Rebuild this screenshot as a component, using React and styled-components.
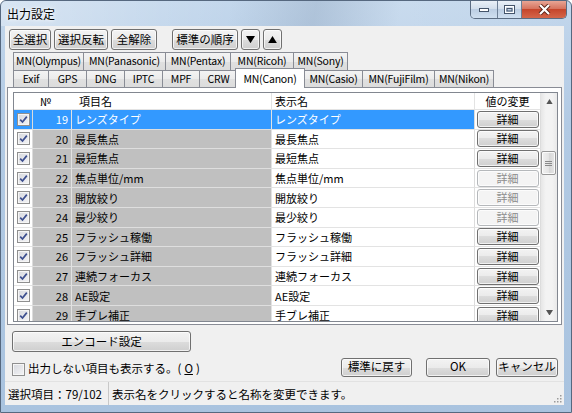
import React from 'react';
import styled, { createGlobalStyle } from 'styled-components';

const GlobalStyle = createGlobalStyle`
  html, body { margin: 0; padding: 0; background: #fff; }
  body { font-family: "Noto Sans CJK JP", "Noto Sans", sans-serif; color: #000; }
  * { box-sizing: border-box; }
`;

const Window = styled.div`
  width: 572px;
  height: 413px;
  display: flex;
  flex-direction: column;
  background: linear-gradient(180deg, #c3d7ec 0%, #b2cae4 30%, #a9c3df 100%);
  border: 1px solid #56687f;
  border-radius: 6px 6px 0 0;
  overflow: hidden;
`;

const TitleBar = styled.div`
  height: 25px;
  display: flex;
  align-items: flex-start;
  padding: 0 4px 0 6px;
  background: linear-gradient(100deg, rgba(255,255,255,0.35) 0%, rgba(255,255,255,0) 40%,
    rgba(120,140,165,0.25) 55%, rgba(255,255,255,0.1) 70%, rgba(255,255,255,0) 100%);
`;

const Title = styled.div`
  font-size: 12px;
  line-height: 14px;
  margin-top: 6px;
  text-shadow: 0 0 6px #fff, 0 0 3px #fff;
`;

const Controls = styled.div`
  margin-left: auto;
  display: flex;
  border: 1px solid #5b6c82;
  border-top: none;
  border-radius: 0 0 5px 5px;
  overflow: hidden;
  height: 18px;
`;

const ControlBtn = styled.div`
  width: ${(p) => p.w}px;
  height: 100%;
  display: flex;
  align-items: center;
  justify-content: center;
  border-left: ${(p) => (p.first ? 'none' : '1px solid #6d7f96')};
  background: ${(p) =>
    p.close
      ? 'linear-gradient(180deg, #e8a595 0%, #d6745f 45%, #c6462c 50%, #d4664a 100%)'
      : 'linear-gradient(180deg, #e9f0f8 0%, #d3dfec 45%, #bccee3 50%, #cfdff0 100%)'};
`;

const Client = styled.div`
  flex: 1;
  margin: 0 7px 7px 4px;
  background: #f0f0f0;
  display: flex;
  flex-direction: column;
`;

const Toolbar = styled.div`
  display: flex;
  gap: 3px;
  padding: 3px 0 0 4px;
  height: 24px;
`;

const Button = styled.button`
  width: ${(p) => p.w}px;
  height: ${(p) => p.h || 21}px;
  margin-left: ${(p) => p.ml || 0}px;
  padding: 0;
  font-family: inherit;
  font-size: ${(p) => p.fs || 11.5}px;
  line-height: 1;
  color: ${(p) => (p.disabled ? '#8d8d8d' : '#000')};
  border: 1px solid ${(p) => (p.disabled ? '#b5b8bb' : '#707070')};
  border-radius: 3px;
  background: ${(p) =>
    p.disabled
      ? '#f4f4f4'
      : 'linear-gradient(180deg, #f3f3f3 0%, #ebebeb 50%, #dddddd 50%, #cfcfcf 100%)'};
  box-shadow: inset 0 0 0 1px rgba(255, 255, 255, 0.7);
  display: flex;
  align-items: center;
  justify-content: center;
  flex-shrink: 0;
`;

const TabStrip = styled.div`
  margin: 2px 2px 0 2px;
  padding-left: 6px;
  display: flex;
  flex-direction: column;
`;

const TabRow = styled.div`
  display: flex;
  height: ${(p) => p.h}px;
  position: relative;
  z-index: ${(p) => p.z};
`;

const Tab = styled.div`
  width: ${(p) => p.w}px;
  margin-right: -1px;
  border: 1px solid #898c95;
  border-bottom: none;
  font-size: 10.5px;
  letter-spacing: -0.2px;
  line-height: 1;
  display: flex;
  align-items: center;
  justify-content: center;
  background: linear-gradient(180deg, #f3f3f3 0%, #ebebeb 50%, #e0e0e0 50%, #dcdcdc 100%);
  white-space: nowrap;
  ${(p) =>
    p.active &&
    `
    background: #fff;
    margin: -2px -1px -1px -2px;
    width: ${p.w + 3}px;
    height: calc(100% + 3px);
    position: relative;
    z-index: 2;
    padding-top: 1px;
  `}
`;

const Panel = styled.div`
  margin: 0 2px;
  height: 238px;
  border: 1px solid #898c95;
  background: #fff;
  padding: 4px 0 0 5px;
`;

const List = styled.div`
  width: 545px;
  height: 230px;
  border: 1px solid #828790;
  display: flex;
  background: #fff;
`;

const Grid = styled.div`
  flex: 1;
  overflow: hidden;
  display: flex;
  flex-direction: column;
`;

const cols = '19px 39px 200px 203px 66px';

const HeaderRow = styled.div`
  display: grid;
  grid-template-columns: ${cols};
  height: 17px;
  flex-shrink: 0;
  border-bottom: 1px solid #e3e3e3;
`;

const HeadCell = styled.div`
  font-size: 11px;
  line-height: 16px;
  padding-left: ${(p) => p.pl || 0}px;
  text-align: ${(p) => p.align || 'left'};
  border-right: ${(p) => (p.edge ? '1px solid #e3e3e3' : 'none')};
`;

const Row = styled.div`
  display: grid;
  grid-template-columns: ${cols};
  height: 19.6px;
  flex-shrink: 0;
`;

const Cell = styled.div`
  font-size: 11px;
  line-height: 18px;
  white-space: nowrap;
  overflow: hidden;
  display: flex;
  align-items: center;
  justify-content: ${(p) => (p.right ? 'flex-end' : p.center ? 'center' : 'flex-start')};
  padding: ${(p) => (p.right ? '0 3px 0 0' : p.center ? '0' : '0 0 0 3px')};
  background: ${(p) => (p.sel ? '#3399ff' : p.gray ? '#c0c0c0' : '#fff')};
  color: ${(p) => (p.sel ? '#fff' : '#000')};
  border-bottom: 1px solid ${(p) => (p.gray ? '#dedede' : '#e3e3e3')};
  border-right: 1px solid ${(p) => (p.gray ? '#e2e2e2' : '#dcdcdc')};
`;

const CheckBox = styled.span`
  width: 13px;
  height: 13px;
  border: 1px solid #8f8f8f;
  background: linear-gradient(135deg, #d6d8de 0%, #f4f4f6 100%);
  box-shadow: inset 0 0 0 1px #f6f6f6;
  display: inline-flex;
  align-items: center;
  justify-content: center;
  flex-shrink: 0;
`;

const ScrollBar = styled.div`
  width: 16px;
  display: flex;
  flex-direction: column;
  background: linear-gradient(90deg, #e6e6e6 0%, #f3f3f3 30%, #f3f3f3 70%, #e9e9e9 100%);
`;

const ScrollArrow = styled.div`
  height: 17px;
  display: flex;
  align-items: center;
  justify-content: center;
`;

const Track = styled.div`
  flex: 1;
  padding-top: 41px;
`;

const Thumb = styled.div`
  width: 15px;
  height: 24px;
  border: 1px solid #979797;
  border-radius: 2px;
  background: linear-gradient(90deg, #f2f2f2 0%, #e4e4e4 50%, #d6d6d6 51%, #e6e6e6 100%);
  box-shadow: inset 0 0 0 1px rgba(255, 255, 255, 0.8);
  display: flex;
  align-items: center;
  justify-content: center;
`;

const EncodeRow = styled.div`
  display: flex;
  padding: 6px 0 0 7px;
`;

const BottomRow = styled.div`
  display: flex;
  align-items: center;
  height: 24px;
  margin-top: 4px;
  padding: 0 6px 0 7px;
`;

const CheckLabel = styled.label`
  display: flex;
  align-items: center;
  gap: 3px;
  font-size: 11.5px;
  line-height: 1;
  margin-top: 2px;
`;

const Underline = styled.span`
  text-decoration: underline;
`;

const ButtonGroup = styled.div`
  margin-left: auto;
  display: flex;
  align-items: center;
  gap: 6px;
  margin-top: -2px;
`;

const StatusBar = styled.div`
  height: 24px;
  margin-top: 1px;
  display: flex;
  align-items: center;
  font-size: 11.5px;
  line-height: 1;
  border-top: 1px solid #e2e2e2;
  position: relative;
`;

const StatusItem = styled.div`
  padding: 3px 6px 0 3px;
  height: 100%;
  display: flex;
  align-items: center;
  border-right: ${(p) => (p.sep ? '1px solid #c8c8c8' : 'none')};
`;

const Grip = styled.div`
  position: absolute;
  right: 2px;
  bottom: 2px;
  width: 10px;
  height: 10px;
`;

const tabs1 = [
  ['MN(Olympus)', 71],
  ['MN(Panasonic)', 83],
  ['MN(Pentax)', 66],
  ['MN(Ricoh)', 64],
  ['MN(Sony)', 55],
];

const tabs2 = [
  ['Exif', 36],
  ['GPS', 39],
  ['DNG', 39],
  ['IPTC', 39],
  ['MPF', 38],
  ['CRW', 39],
  ['MN(Canon)', 67, true],
  ['MN(Casio)', 59],
  ['MN(FujiFilm)', 73],
  ['MN(Nikon)', 60],
];

const rows = [
  { no: 19, name: 'レンズタイプ', sel: true },
  { no: 20, name: '最長焦点' },
  { no: 21, name: '最短焦点' },
  { no: 22, name: '焦点単位/mm', off: true },
  { no: 23, name: '開放絞り', off: true },
  { no: 24, name: '最少絞り', off: true },
  { no: 25, name: 'フラッシュ稼働' },
  { no: 26, name: 'フラッシュ詳細' },
  { no: 27, name: '連続フォーカス' },
  { no: 28, name: 'AE設定' },
  { no: 29, name: '手ブレ補正' },
];

const Check = () => (
  <CheckBox>
    <svg width="9" height="9" viewBox="0 0 9 9">
      <path d="M1.2 4.6 L3.5 7 L7.8 1.6" fill="none" stroke="#3d4f8f" strokeWidth="1.7" />
    </svg>
  </CheckBox>
);

const Triangle = ({ down, size = 9, color = '#000' }) => (
  <svg width={size} height={size * 0.8} viewBox="0 0 10 8">
    <path d={down ? 'M0 0 H10 L5 8 Z' : 'M0 8 H10 L5 0 Z'} fill={color} />
  </svg>
);

export default function App() {
  return (
    <>
      <GlobalStyle />
      <Window>
        <TitleBar>
          <Title>出力設定</Title>
          <Controls>
            <ControlBtn w={26} first>
              <svg width="10" height="4" viewBox="0 0 10 4">
                <rect x="0.5" y="0.5" width="9" height="3" fill="#fff" stroke="#44546a" />
              </svg>
            </ControlBtn>
            <ControlBtn w={24}>
              <svg width="11" height="9" viewBox="0 0 11 9">
                <rect x="0.5" y="0.5" width="10" height="8" fill="none" stroke="#44546a" />
                <rect x="1.5" y="1.5" width="8" height="6" fill="none" stroke="#fff" />
                <rect x="3" y="3.5" width="5" height="2.5" fill="none" stroke="#44546a" />
              </svg>
            </ControlBtn>
            <ControlBtn w={45} close>
              <svg width="13" height="11" viewBox="0 0 13 11">
                <path d="M2 1 L11 10 M11 1 L2 10" stroke="#5a2418" strokeWidth="4" />
                <path d="M2 1 L11 10 M11 1 L2 10" stroke="#fff" strokeWidth="2.2" />
              </svg>
            </ControlBtn>
          </Controls>
        </TitleBar>
        <Client>
          <Toolbar>
            <Button w={42}>全選択</Button>
            <Button w={54}>選択反転</Button>
            <Button w={46}>全解除</Button>
            <Button w={66} ml={12}>標準の順序</Button>
            <Button w={19}><Triangle down /></Button>
            <Button w={19}><Triangle /></Button>
          </Toolbar>
          <TabStrip>
            <TabRow h={18} z={0}>
              {tabs1.map(([label, w]) => (
                <Tab key={label} w={w}>{label}</Tab>
              ))}
            </TabRow>
            <TabRow h={17} z={1}>
              {tabs2.map(([label, w, active]) => (
                <Tab key={label} w={w} active={active}>{label}</Tab>
              ))}
            </TabRow>
          </TabStrip>
          <Panel>
            <List>
              <Grid>
                <HeaderRow>
                  <HeadCell />
                  <HeadCell pl={7}>№</HeadCell>
                  <HeadCell pl={7} edge>項目名</HeadCell>
                  <HeadCell pl={3} edge>表示名</HeadCell>
                  <HeadCell align="center" edge>値の変更</HeadCell>
                </HeaderRow>
                {rows.map((r) => (
                  <Row key={r.no}>
                    <Cell center sel={r.sel}><Check /></Cell>
                    <Cell right gray sel={r.sel}>{r.no}</Cell>
                    <Cell gray sel={r.sel}>{r.name}</Cell>
                    <Cell sel={r.sel}>{r.name}</Cell>
                    <Cell center>
                      <Button w={62} h={17} fs={11} disabled={r.off}>詳細</Button>
                    </Cell>
                  </Row>
                ))}
              </Grid>
              <ScrollBar>
                <ScrollArrow><Triangle size={7} color="#555" /></ScrollArrow>
                <Track>
                  <Thumb>
                    <svg width="7" height="7" viewBox="0 0 7 7">
                      <path d="M0 1.5 H7 M0 3.5 H7 M0 5.5 H7" stroke="#8a8a8a" strokeWidth="1" />
                    </svg>
                  </Thumb>
                </Track>
                <ScrollArrow><Triangle down size={7} color="#555" /></ScrollArrow>
              </ScrollBar>
            </List>
          </Panel>
          <EncodeRow>
            <Button w={179}>エンコード設定</Button>
          </EncodeRow>
          <BottomRow>
            <CheckLabel>
              <CheckBox />
              出力しない項目も表示する。(<Underline>O</Underline>)
            </CheckLabel>
            <ButtonGroup>
              <Button w={71} h={19}>標準に戻す</Button>
              <Button w={64} h={19} ml={8}>OK</Button>
              <Button w={62} h={19}>キャンセル</Button>
            </ButtonGroup>
          </BottomRow>
          <StatusBar>
            <StatusItem sep>選択項目：79/102</StatusItem>
            <StatusItem>表示名をクリックすると名称を変更できます。</StatusItem>
            <Grip>
              <svg width="10" height="10" viewBox="0 0 10 10">
                {[[8, 2], [8, 5], [8, 8], [5, 5], [5, 8], [2, 8]].map(([x, y]) => (
                  <rect key={`${x}-${y}`} x={x} y={y} width="1.5" height="1.5" fill="#9a9a9a" />
                ))}
              </svg>
            </Grip>
          </StatusBar>
        </Client>
      </Window>
    </>
  );
}
